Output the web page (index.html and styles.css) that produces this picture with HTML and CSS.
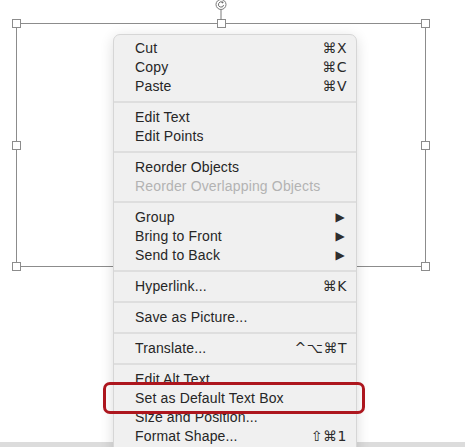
FILE: index.html
```html
<!DOCTYPE html>
<html>
<head>
<meta charset="utf-8">
<link rel="stylesheet" href="styles.css">
</head>
<body>
<div class="stage">
  <div class="frame">
    <span class="handle h-tl"></span>
    <span class="handle h-tc"></span>
    <span class="handle h-tr"></span>
    <span class="handle h-ml"></span>
    <span class="handle h-mr"></span>
    <span class="handle h-bl"></span>
    <span class="handle h-bc"></span>
    <span class="handle h-br"></span>
  </div>
  <div class="rotate">
    <svg width="14" height="20" viewBox="0 0 14 20">
      <line x1="7" y1="10" x2="7" y2="20" stroke="#7a7a7a" stroke-width="1"/>
      <circle cx="7" cy="4.5" r="5" fill="#fff" stroke="#7a7a7a" stroke-width="1"/>
      <path d="M9.6 5 A2.6 2.6 0 1 1 8.4 2.3" fill="none" stroke="#6e6e6e" stroke-width="1"/>
      <path d="M7.4 1.1 L9.8 1.9 L8.4 3.8 Z" fill="#6e6e6e"/>
    </svg>
  </div>
  <div class="bottombar"></div>
  <div class="menu">
    <div class="group">
      <div class="row"><span>Cut</span><span class="key">⌘X</span></div>
      <div class="row"><span>Copy</span><span class="key">⌘C</span></div>
      <div class="row"><span>Paste</span><span class="key">⌘V</span></div>
    </div>
    <div class="sep"></div>
    <div class="group">
      <div class="row"><span>Edit Text</span></div>
      <div class="row"><span>Edit Points</span></div>
    </div>
    <div class="sep"></div>
    <div class="group">
      <div class="row"><span>Reorder Objects</span></div>
      <div class="row disabled"><span>Reorder Overlapping Objects</span></div>
    </div>
    <div class="sep"></div>
    <div class="group">
      <div class="row"><span>Group</span><span class="arrow">▶</span></div>
      <div class="row"><span>Bring to Front</span><span class="arrow">▶</span></div>
      <div class="row"><span>Send to Back</span><span class="arrow">▶</span></div>
    </div>
    <div class="sep"></div>
    <div class="group">
      <div class="row"><span>Hyperlink...</span><span class="key">⌘K</span></div>
    </div>
    <div class="sep"></div>
    <div class="group">
      <div class="row"><span>Save as Picture...</span></div>
    </div>
    <div class="sep"></div>
    <div class="group">
      <div class="row"><span>Translate...</span><span class="key">^⌥⌘T</span></div>
    </div>
    <div class="sep"></div>
    <div class="group">
      <div class="row"><span>Edit Alt Text</span></div>
      <div class="row"><span>Set as Default Text Box</span></div>
      <div class="row"><span>Size and Position...</span></div>
      <div class="row"><span>Format Shape...</span><span class="key">⇧⌘1</span></div>
    </div>
  </div>
  <div class="highlight"></div>
</div>
</body>
</html>
```

FILE: styles.css
```css
html, body {
  margin: 0;
  padding: 0;
  background: #ffffff;
}

.stage {
  position: relative;
  width: 465px;
  height: 447px;
  overflow: hidden;
  font-family: "Liberation Sans", Arial, "DejaVu Sans", sans-serif;
}

.frame {
  position: absolute;
  left: 16px;
  top: 23px;
  width: 410px;
  height: 244px;
  border: 1px solid #8c8c8c;
  box-sizing: border-box;
}

.handle {
  position: absolute;
  width: 9px;
  height: 9px;
  box-sizing: border-box;
  background: #ffffff;
  border: 1px solid #8c8c8c;
}

.h-tl { left: -5px; top: -5px; }
.h-tc { left: 200px; top: -5px; }
.h-tr { right: -5px; top: -5px; }
.h-ml { left: -5px; top: 117px; }
.h-mr { right: -5px; top: 117px; }
.h-bl { left: -5px; bottom: -5px; }
.h-bc { left: 200px; bottom: -5px; }
.h-br { right: -5px; bottom: -5px; }

.rotate {
  position: absolute;
  left: 214px;
  top: 0;
  width: 14px;
  height: 20px;
}

.rotate svg {
  display: block;
}

.bottombar {
  position: absolute;
  left: 0;
  right: 0;
  top: 442px;
  height: 5px;
  background: #dcdcdc;
}

.menu {
  position: absolute;
  left: 113px;
  top: 34px;
  width: 244px;
  height: 430px;
  box-sizing: border-box;
  padding-top: 4px;
  background: #f0f0f0;
  border: 1px solid #d6d6d6;
  border-radius: 7px;
  box-shadow: 0 3px 14px rgba(0, 0, 0, 0.14);
  color: #262626;
  font-size: 14px;
  letter-spacing: 0.15px;
}

.group {
  display: flex;
  flex-direction: column;
}

.row {
  display: flex;
  align-items: center;
  justify-content: space-between;
  height: 19px;
  line-height: 19px;
  padding: 0 9px 0 21px;
  white-space: nowrap;
}

.row.disabled {
  color: #b3b3b3;
}

.key {
  font-family: "DejaVu Sans", "Liberation Sans", sans-serif;
  font-size: 14px;
  letter-spacing: 0.5px;
  color: #2a2a2a;
}

.arrow {
  font-family: "DejaVu Sans", sans-serif;
  font-size: 12px;
  color: #2e2e2e;
  padding-right: 2px;
}

.sep {
  height: 2px;
  margin: 5px 0;
  background: #dedede;
}

.highlight {
  position: absolute;
  left: 103px;
  top: 382px;
  width: 262px;
  height: 32px;
  box-sizing: border-box;
  border: 3px solid #ad161e;
  border-radius: 7px;
}
```
